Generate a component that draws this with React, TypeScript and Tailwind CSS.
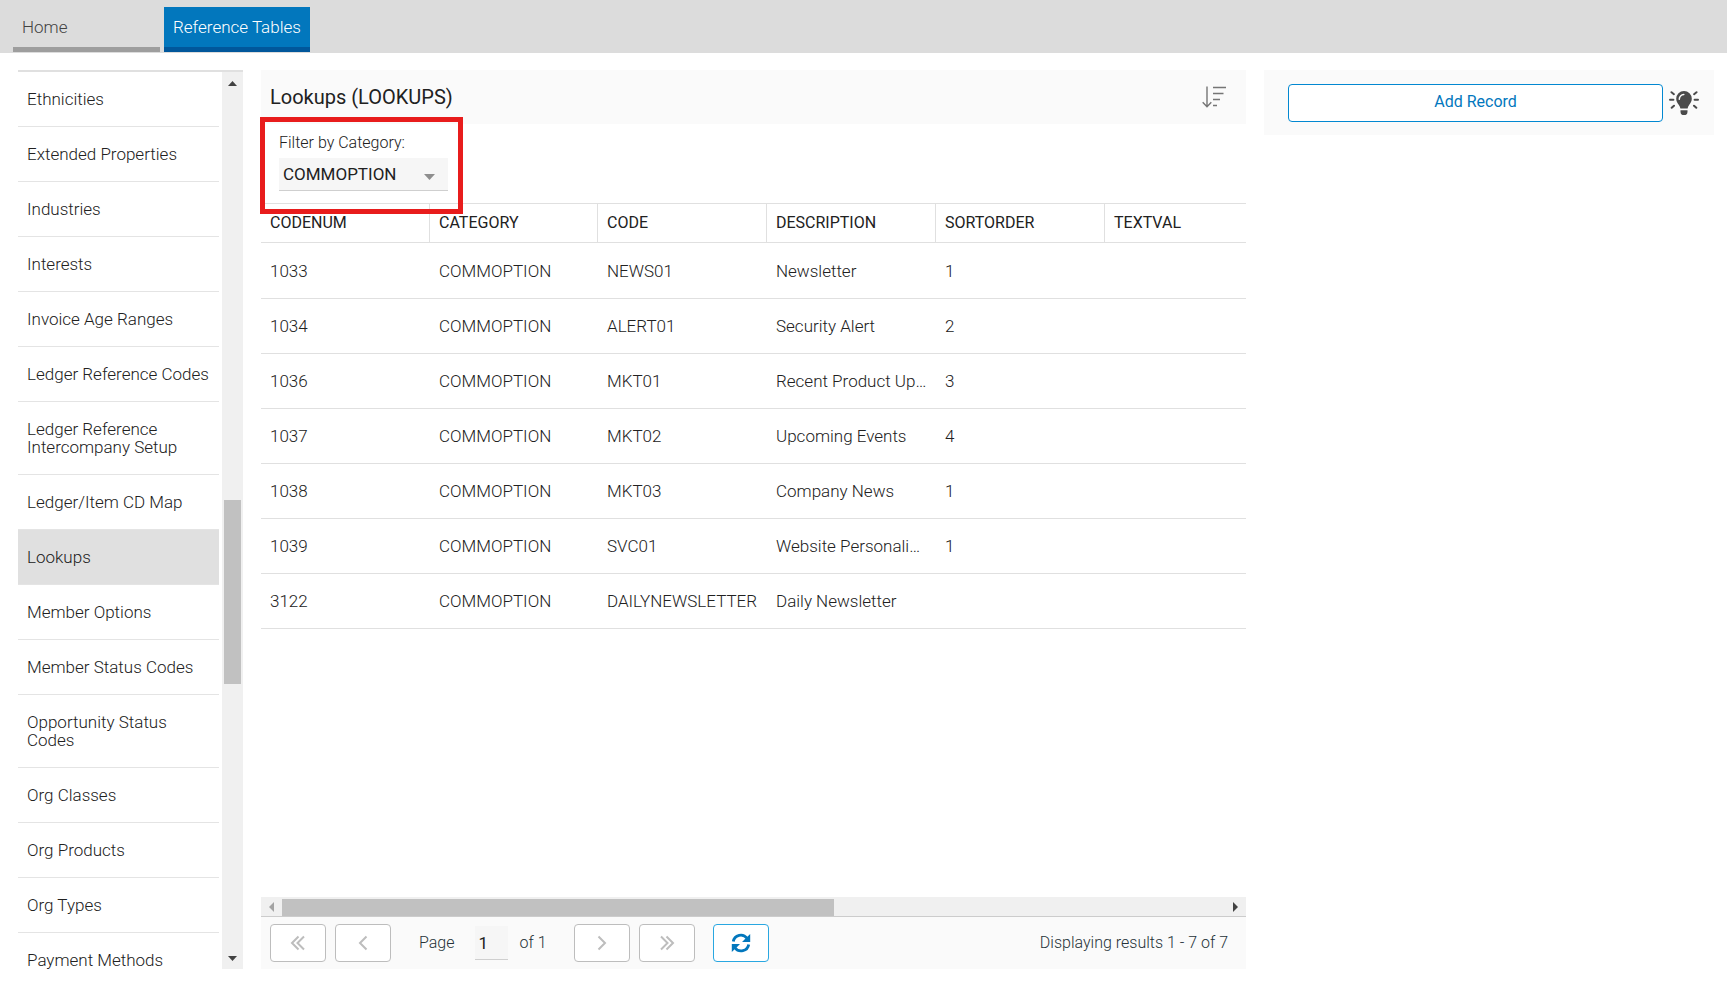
import React from "react";

const items = [
  "Ethnicities",
  "Extended Properties",
  "Industries",
  "Interests",
  "Invoice Age Ranges",
  "Ledger Reference Codes",
  "Ledger Reference Intercompany Setup",
  "Ledger/Item CD Map",
  "Lookups",
  "Member Options",
  "Member Status Codes",
  "Opportunity Status Codes",
  "Org Classes",
  "Org Products",
  "Org Types",
  "Payment Methods",
];

const columns = ["CODENUM", "CATEGORY", "CODE", "DESCRIPTION", "SORTORDER", "TEXTVAL"];

const rows = [
  ["1033", "COMMOPTION", "NEWS01", "Newsletter", "1", ""],
  ["1034", "COMMOPTION", "ALERT01", "Security Alert", "2", ""],
  ["1036", "COMMOPTION", "MKT01", "Recent Product Up…", "3", ""],
  ["1037", "COMMOPTION", "MKT02", "Upcoming Events", "4", ""],
  ["1038", "COMMOPTION", "MKT03", "Company News", "1", ""],
  ["1039", "COMMOPTION", "SVC01", "Website Personali…", "1", ""],
  ["3122", "COMMOPTION", "DAILYNEWSLETTER", "Daily Newsletter", "", ""],
];

function Triangle({ points, w, h, className }: { points: string; w: number; h: number; className: string }) {
  return (
    <svg width={w} height={h} viewBox={`0 0 ${w} ${h}`} className={className} aria-hidden="true">
      <polygon points={points} fill="currentColor" />
    </svg>
  );
}

function Chevrons({ double, flip }: { double?: boolean; flip?: boolean }) {
  return (
    <svg
      width="16"
      height="16"
      viewBox="0 0 16 16"
      fill="none"
      stroke="currentColor"
      strokeWidth="2"
      className={flip ? "rotate-180" : ""}
      aria-hidden="true"
    >
      {double ? (
        <>
          <path d="M8.500 1.500 2 8l6.500 6.500" />
          <path d="M14 1.500 7.500 8l6.500 6.500" />
        </>
      ) : (
        <path d="M11.500 1.500 5 8l6.500 6.500" />
      )}
    </svg>
  );
}

function PagerButton({ label, children }: { label: string; children: React.ReactNode }) {
  return (
    <button
      type="button"
      aria-label={label}
      className="flex h-[38px] w-14 items-center justify-center rounded border border-[#bdbdbd] bg-white text-[#bdbdbd]"
    >
      {children}
    </button>
  );
}

function SortIcon() {
  return (
    <svg width="24" height="22" viewBox="0 0 24 22" fill="none" stroke="#757575" strokeWidth="1.400" aria-hidden="true">
      <path d="M5 .5v20M.7 16.200 5 20.800l4.300-4.600" />
      <path d="M11 1.500h13M11 7.500h10.500M11 13.500h7M11 19.500h4" />
    </svg>
  );
}

function RefreshIcon() {
  return (
    <svg width="20" height="20" viewBox="0 0 20 20" fill="none" aria-hidden="true">
      <path d="M2.300 8.500A7.600 7.600 0 0 1 16 5.300" stroke="#0277bd" strokeWidth="2.800" />
      <path d="M17.700 11.500A7.600 7.600 0 0 1 4 14.700" stroke="#0277bd" strokeWidth="2.800" />
      <path d="M19.200 1v8h-8.200l3-2.900 2.600-2.500Z" fill="#0277bd" />
      <path d="M.8 19v-8H9l-3 2.900-2.600 2.500Z" fill="#0277bd" />
    </svg>
  );
}

function BulbIcon() {
  return (
    <svg width="30" height="24" viewBox="0 0 30 24" aria-hidden="true">
      <path
        d="M15 0a7.800 7.800 0 0 0-7.800 7.800c0 3 1.500 4.500 2.700 6.200.8 1.200 1.300 2.300 1.500 3.500h7.200c.2-1.200.7-2.300 1.500-3.500 1.200-1.700 2.700-3.200 2.700-6.200A7.800 7.800 0 0 0 15 0Z"
        fill="#4a4a4a"
      />
      <path d="M11.500 19.300h7v1.700a3.500 3.200 0 0 1-7 0Z" fill="#4a4a4a" />
      <path d="M10.300 8.200A4.600 4.600 0 0 1 14.800 3.500" stroke="#fafafa" strokeWidth="1.500" fill="none" strokeLinecap="round" />
      <path
        d="M1 8.800h3.400M25.600 8.800H29M2.500 1.200l2.400 2M27.500 1.200l-2.400 2M2.700 16.800l2.300-2.100M27.300 16.800l-2.300-2.100"
        stroke="#4a4a4a"
        strokeWidth="2"
        strokeLinecap="round"
      />
    </svg>
  );
}

export default function App() {
  return (
    <div className="flex h-screen flex-col bg-white pb-[13px] font-['Roboto',sans-serif] text-[17px] font-light text-[#212121]">
      <nav className="flex h-[53px] shrink-0 gap-1 bg-[#dcdcdc] px-[13px] pt-[7px] pb-px">
        <a href="#home" className="flex w-[147px] items-center border-b-[5px] border-[#9e9e9e] px-[9px] pt-0.5 text-[#424242]">
          Home
        </a>
        <a
          href="#reference"
          className="flex items-center border-b-[5px] border-[#01579b] bg-[#0277bd] px-[9px] pt-0.5 whitespace-nowrap text-white"
        >
          Reference Tables
        </a>
      </nav>

      <div className="flex min-h-0 flex-1 gap-[18px] pt-[17px] pr-[13px] pl-[18px]">
        <aside className="flex w-[225px] shrink-0 border-t-2 border-[#e0e0e0]">
          <ul className="w-[201px] overflow-hidden">
            {items.map((item) => (
              <li key={item} className="border-b border-[#e4e4e4]">
                <a
                  href="#table"
                  className={
                    item === "Lookups"
                      ? "block bg-[#e0e0e0] px-[9px] py-[18px] leading-[18px]"
                      : "block px-[9px] py-[18px] leading-[18px]"
                  }
                >
                  {item}
                </a>
              </li>
            ))}
          </ul>
          <div className="ml-[3px] flex flex-1 flex-col items-center bg-[#f0f0f0] pt-[9px] pb-2">
            <Triangle points="0,5 4.500,0 9,5" w={9} h={5} className="text-[#424242]" />
            <div className="flex w-full flex-1 flex-col px-0.5">
              <div className="flex-[414]" />
              <div className="flex-[183] bg-[#c1c1c1]" />
              <div className="flex-[272]" />
            </div>
            <Triangle points="0,0 9,0 4.500,5" w={9} h={5} className="text-[#424242]" />
          </div>
        </aside>

        <div className="grid min-h-0 min-w-0 flex-1 grid-cols-[985fr_450fr] gap-[18px]">
          <main className="flex min-h-0 min-w-0 flex-col">
            <header className="flex h-[54px] shrink-0 items-center justify-between bg-[#fafafa] pr-5 pl-[9px]">
              <h1 className="text-xl font-normal">Lookups (LOOKUPS)</h1>
              <button type="button" aria-label="Sort">
                <SortIcon />
              </button>
            </header>

            <div className="relative h-[79px] shrink-0 px-[18px] pt-[9px]">
              <div className="absolute -top-[7px] -left-px z-10 h-[97px] w-[203px] border-5 border-[#e81c1c]" />
              <label htmlFor="category" className="block text-base leading-5">
                Filter by Category:
              </label>
              <div className="relative mt-[5px] w-[169px]">
                <select
                  id="category"
                  className="h-[33px] w-full appearance-none rounded-none border-b border-[#cfcfcf] bg-[#f6f6f6] pt-0.5 pr-8 pl-1 font-normal"
                >
                  <option>COMMOPTION</option>
                </select>
                <Triangle
                  points="0,0 11,0 5.500,6"
                  w={11}
                  h={6}
                  className="pointer-events-none absolute top-4 right-[13px] text-[#8e8e8e]"
                />
              </div>
            </div>

            <div className="min-h-0 flex-1 overflow-hidden">
              <table className="w-full table-fixed border-separate border-spacing-0 border-t border-[#e0e0e0] text-left">
                <colgroup>
                  <col className="w-[169px]" />
                  <col className="w-[168px]" />
                  <col className="w-[169px]" />
                  <col className="w-[169px]" />
                  <col className="w-[169px]" />
                  <col />
                </colgroup>
                <thead>
                  <tr className="h-[39px] text-base leading-6">
                    {columns.map((c) => (
                      <th
                        key={c}
                        className="border-r border-b border-[#e0e0e0] px-[9px] font-normal last:border-r-0"
                      >
                        {c}
                      </th>
                    ))}
                  </tr>
                </thead>
                <tbody>
                  {rows.map((r) => (
                    <tr key={r[0]} className="h-[55px] first:h-14">
                      {r.map((cell, i) => (
                        <td key={columns[i]} className="truncate border-b border-[#e0e0e0] px-[9px] pt-0.5">
                          {cell}
                        </td>
                      ))}
                    </tr>
                  ))}
                </tbody>
              </table>
            </div>

            <div className="flex h-5 shrink-0 items-center justify-between border-b border-[#cccccc] bg-[#f0f0f0] px-2">
              <Triangle points="5,0 5,10 0,5" w={5} h={10} className="text-[#a3a3a3]" />
              <div className="mr-5 ml-2 flex h-full flex-1 pt-0.5">
                <div className="flex-[551] bg-[#c1c1c1]" />
                <div className="flex-[379]" />
              </div>
              <Triangle points="0,0 5,5 0,10" w={5} h={10} className="text-[#424242]" />
            </div>

            <footer className="flex h-[52px] shrink-0 items-center bg-[#fafafa] px-[9px] text-base text-[#263238]">
              <div className="flex gap-[9px]">
                <PagerButton label="First page">
                  <Chevrons double />
                </PagerButton>
                <PagerButton label="Previous page">
                  <Chevrons />
                </PagerButton>
              </div>
              <label htmlFor="page" className="ml-7">
                Page
              </label>
              <input
                id="page"
                defaultValue="1"
                className="ml-5 h-[34px] w-[33px] border-b border-[#cfcfcf] bg-[#f6f6f6] px-1 text-[17px] font-normal text-[#212121]"
              />
              <span className="ml-3 w-[54px]">of 1</span>
              <div className="flex gap-[9px]">
                <PagerButton label="Next page">
                  <Chevrons flip />
                </PagerButton>
                <PagerButton label="Last page">
                  <Chevrons double flip />
                </PagerButton>
              </div>
              <button
                type="button"
                aria-label="Refresh"
                className="ml-[18px] flex h-[38px] w-14 items-center justify-center rounded border border-[#29a7e1] bg-white"
              >
                <RefreshIcon />
              </button>
              <span className="ml-auto pr-[9px]">Displaying results 1 - 7 of 7</span>
            </footer>
          </main>

          <section className="flex h-[65px] min-w-0 gap-[6px] bg-[#fafafa] pt-[14px] pr-[15px] pl-6">
            <button
              type="button"
              className="h-[38px] flex-1 rounded border border-[#0288d1] bg-white pb-0.5 text-base font-normal text-[#0277bd]"
            >
              Add Record
            </button>
            <button type="button" aria-label="Hints" className="flex h-[38px] items-center">
              <BulbIcon />
            </button>
          </section>
        </div>
      </div>
    </div>
  );
}
